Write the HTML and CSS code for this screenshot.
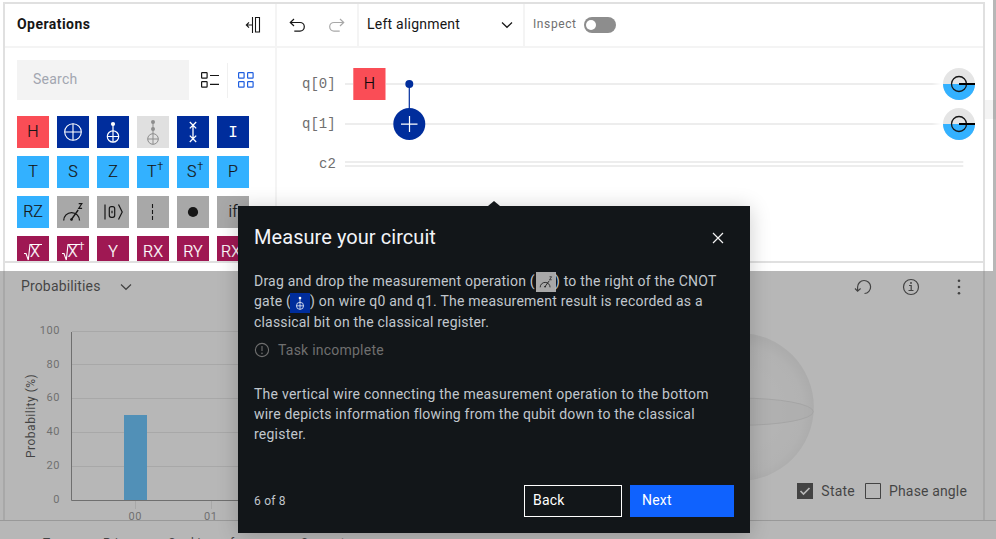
FILE: index.html
```html
<!DOCTYPE html>
<html lang="en">
<head>
<meta charset="utf-8">
<title>Circuit composer</title>
<link rel="stylesheet" href="styles.css">
</head>
<body>
<svg class="defs" width="0" height="0">
  <symbol id="cnot" viewBox="0 0 32 32"><g fill="none" stroke="currentColor" stroke-width="1.2"><circle cx="16" cy="20.5" r="5.7"/><path d="M16 8v18.2M10.3 20.5h11.4"/></g><circle cx="16" cy="8" r="2.1" fill="currentColor"/></symbol>
  <symbol id="measure" viewBox="0 0 32 32"><g fill="none" stroke="currentColor" stroke-width="1.3"><path d="M6.700 24.500a7.900 7.900 0 0 1 15.800 0M14 24l7.200-10"/><path d="M21.700 7.600h3.200l-3.200 4.800h3.400" stroke-width="1.100"/></g><circle cx="14.500" cy="23.500" r="1.300" fill="currentColor"/></symbol>
</svg>
<div class="page">
  <main class="frame">
    <section class="composer">
      <aside class="ops">
        <header class="bar ops-head"><h2>Operations</h2>
          <svg width="16" height="16" viewBox="0 0 16 16" fill="none" stroke="#161616" stroke-width="1.100"><path d="M7.500 0v16M10.500.5h4v14.500h-4zM7 8H1.500M4 5.300L1.300 8 4 10.700"/></svg>
        </header>
        <div class="tools">
          <div class="search">Search</div>
          <svg class="list" width="18" height="16" viewBox="0 0 18 16" fill="none" stroke="#161616" stroke-width="1.200"><rect x=".6" y=".6" width="5.500" height="5.500" rx=".6"/><rect x=".6" y="9.600" width="5.500" height="5.500" rx=".6"/><path d="M9 3.500h9M9 12.400h9"/></svg>
          <i class="sep"></i>
          <svg width="16" height="16" viewBox="0 0 16 16" fill="none" stroke="#1f5fe0" stroke-width="1.200"><rect x=".6" y=".6" width="5.500" height="5.500" rx=".6"/><rect x="9.600" y=".6" width="5.500" height="5.500" rx=".6"/><rect x=".6" y="9.600" width="5.500" height="5.500" rx=".6"/><rect x="9.600" y="9.600" width="5.500" height="5.500" rx=".6"/></svg>
        </div>
        <div class="gates">
          <div class="g red">H</div>
          <div class="g navy"><svg viewBox="0 0 32 32" fill="none" stroke="#fff" stroke-width="1.100"><circle cx="16" cy="16" r="8.300"/><path d="M16 7.700v16.600M7.700 16h16.600"/></svg></div>
          <div class="g navy"><svg><use href="#cnot"/></svg></div>
          <div class="g off"><svg viewBox="0 0 32 32"><g fill="none" stroke="currentColor"><circle cx="16" cy="23" r="5.300"/><path d="M16 6v22.300M10.700 23h10.600"/></g><g fill="currentColor"><circle cx="16" cy="6" r="2"/><circle cx="16" cy="13" r="2"/></g></svg></div>
          <div class="g navy"><svg viewBox="0 0 32 32" fill="none" stroke="#fff" stroke-width="1.300"><path d="M16 9v14M12.800 6l6.400 6.400m0-6.400l-6.400 6.400M12.800 19.600l6.400 6.400m0-6.400l-6.400 6.400"/></svg></div>
          <div class="g navy serif">I</div>
          <div class="g sky">T</div><div class="g sky">S</div><div class="g sky">Z</div>
          <div class="g sky">T<sup>†</sup></div><div class="g sky">S<sup>†</sup></div><div class="g sky">P</div>
          <div class="g sky">RZ</div>
          <div class="g gray"><svg><use href="#measure"/></svg></div>
          <div class="g gray"><svg viewBox="0 0 32 32" fill="none" stroke="#161616" stroke-width="1.200"><path d="M8 8.500v15M21.500 8.500l3.700 7.500-3.700 7.500"/><rect x="12.300" y="10.700" width="5.400" height="10.600" rx="2"/><path d="M15 14.700v2.600"/></svg></div>
          <div class="g gray"><svg viewBox="0 0 32 32" fill="none" stroke="#161616" stroke-width="1.100"><path d="M15.500 8v16" stroke-dasharray="4 2"/></svg></div>
          <div class="g gray"><svg viewBox="0 0 32 32"><circle cx="16" cy="16" r="5.100" fill="#161616"/></svg></div>
          <div class="g gray">if</div>
          <div class="g plum root"><svg viewBox="0 0 32 32" fill="none" stroke="#fff" stroke-width="1.100"><path d="M7 17.500h2l2.300 6.500 1.700-15.500h12"/></svg><b>X</b></div>
          <div class="g plum root dag"><svg viewBox="0 0 32 32" fill="none" stroke="#fff" stroke-width="1.100"><path d="M5 17.500h2l2.300 6.500L11 8.500h12"/></svg><b>X</b><sup>†</sup></div>
          <div class="g plum">Y</div><div class="g plum">RX</div><div class="g plum">RY</div><div class="g plum left">RXX</div>
        </div>
      </aside>
      <div class="work">
        <header class="bar">
          <div class="history">
            <svg width="17" height="16" viewBox="0 0 17 16" fill="none" stroke="#161616" stroke-width="1.200"><path d="M1.200 4.500H11a4.300 4.300 0 0 1 0 8.600H5.300M5 1L1.300 4.500 5 8"/></svg>
            <svg width="17" height="16" viewBox="0 0 17 16" fill="none" stroke="#a8a8a8" stroke-width="1.200"><path d="M15.800 4.500H6a4.300 4.300 0 0 0 0 8.600h5.700M12 1l3.700 3.500L12 8"/></svg>
          </div>
          <div class="select"><span>Left alignment</span><svg width="12" height="8" viewBox="0 0 12 8" fill="none" stroke="#161616" stroke-width="1.200"><path d="M1 1.500l5 4.800 5-4.800"/></svg></div>
          <div class="inspect"><span>Inspect</span><i class="toggle"></i></div>
        </header>
        <svg class="circuit" width="706" height="213" viewBox="277 48 706 213">
          <defs><linearGradient id="fade" gradientUnits="userSpaceOnUse" x1="932" x2="941" y1="0" y2="0"><stop stop-color="#ededed"/><stop offset="1" stop-color="#fff"/></linearGradient></defs>
          <g class="wire-name"><text x="302" y="88">q[0]</text><text x="302" y="128">q[1]</text><text x="319" y="168">c2</text></g>
          <g fill="url(#fade)"><rect x="345" y="83" width="596" height="2"/><rect x="345" y="123" width="596" height="2"/></g>
          <g fill="#ededed"><rect x="345" y="161" width="618.300" height="2"/><rect x="345" y="165" width="618.300" height="2"/></g>
          <rect x="353" y="68" width="33" height="32" fill="#fff"/><rect x="353.300" y="68" width="32.200" height="32" fill="#fa4d56"/>
          <text class="h" x="369.300" y="89" text-anchor="middle">H</text>
          <path d="M409.300 84v28" stroke="#002d9c" stroke-width="1.200"/>
          <circle cx="409.300" cy="84" r="4" fill="#002d9c"/><circle cx="409.300" cy="124" r="16" fill="#002d9c"/>
          <path d="M409.500 116v16M401 124.200h16.500" stroke="#fff" stroke-width="1.200"/>
          <g id="disk"><circle cx="959" cy="84" r="16" fill="#e5e5e5"/><path d="M943 84a16 16 0 0 0 32 0z" fill="#33b1ff"/><circle cx="959" cy="84" r="7.500" fill="none" stroke="#161616" stroke-width="1.300"/><path d="M959 84h16" stroke="#000" stroke-width="2"/></g>
          <use href="#disk" y="40"/>
        </svg>
      </div>
    </section>
    <section class="results">
      <div class="chart-pane">
        <div class="chart-title"><span>Probabilities</span><svg width="12" height="8" viewBox="0 0 12 8" fill="none" stroke="#161616" stroke-width="1.200"><path d="M1 1.500l5 4.800 5-4.800"/></svg></div>
        <svg class="chart" width="495" height="215" viewBox="5 305 495 215">
          <g stroke="#e0e0e0"><path d="M72 331.500h428M72 364.500h428M72 398.500h428M72 432.500h428M72 466.500h428M135.500 501v8M211.500 501v8"/></g>
          <path d="M71.500 332v168.500H500" fill="none" stroke="#6f6f6f"/>
          <rect x="124" y="415" width="23" height="85" fill="#33b1ff"/>
          <g class="tick"><text x="60" y="334">100</text><text x="60" y="368">80</text><text x="60" y="401">60</text><text x="60" y="435">40</text><text x="60" y="469">20</text><text x="60" y="503">0</text><text x="142" y="520">00</text><text x="217.500" y="520">01</text></g>
          <text class="axis" transform="translate(34.500 458) rotate(-90)">Probability (%)</text>
        </svg>
      </div>
      <div class="sphere-pane">
        <div class="actions">
          <svg width="18" height="18" viewBox="0 0 18 18" fill="none" stroke="#161616" stroke-width="1.200"><path d="M10.500 15.500a6.500 6.500 0 1 0-6.900-6.500V13M1 10.500l2.600 2.600 3-2.600"/></svg>
          <svg width="18" height="18" viewBox="0 0 18 18" fill="none" stroke="#161616" stroke-width="1.200"><circle cx="9" cy="9" r="7.500"/><path d="M7 7.500h2.200v5M6.500 12.500h5"/><circle cx="9" cy="5" r=".4"/></svg>
          <svg width="18" height="18" viewBox="0 0 18 18" fill="#161616"><circle cx="9" cy="2.700" r="1.300"/><circle cx="9" cy="9" r="1.300"/><circle cx="9" cy="15.200" r="1.300"/></svg>
        </div>
        <svg class="sphere" width="148" height="150" viewBox="-74 -75 148 150"><defs><radialGradient id="ball" cy=".52"><stop offset=".45" stop-color="#f9f9f9"/><stop offset=".85" stop-color="#f5f5f5"/><stop offset="1" stop-color="#e9e9e9"/></radialGradient></defs><circle r="73.800" fill="url(#ball)"/><ellipse cy="4.700" rx="73.300" ry="13.600" fill="#e8e8e8" fill-opacity=".5" stroke="#dadada"/></svg>
        <div class="checks">
          <svg width="16" height="16" viewBox="0 0 16 16"><path fill="#161616" d="M0 0h16v16H0z"/><path d="M3.500 8l3 3 6-6" fill="none" stroke="#fff" stroke-width="1.700"/></svg><span class="state">State</span>
          <svg width="16" height="16" viewBox="0 0 16 16"><path d="M.5.5h15v15H.5z" fill="none" stroke="#161616"/></svg><span class="phase">Phase angle</span>
        </div>
      </div>
    </section>
  </main>
  <div class="scrollbar"></div>
  <footer><span class="terms">Terms</span><span class="privacy">Privacy</span><span class="cookie">Cookie preferences</span><span>Support</span></footer>
  <div class="spotlight"></div>
  <div class="tour">
    <div class="tour-head"><h1>Measure your circuit</h1><svg width="12" height="12" viewBox="0 0 12 12" fill="none" stroke="#f4f4f4" stroke-width="1.200"><path d="M1 1l10 10M11 1L1 11"/></svg></div>
    <p><span class="l1">Drag and drop the measurement operation (<svg class="chip meas"><use href="#measure"/></svg>) to the right of the CNOT</span>
    <span class="l2">gate (<svg class="chip cx"><use href="#cnot"/></svg>) on wire q0 and q1. The measurement result is recorded as a</span>
    <span class="l3">classical bit on the classical register.</span></p>
    <div class="task"><svg width="16" height="16" viewBox="0 0 16 16" fill="none" stroke="#6f6f6f" stroke-width="1.100"><circle cx="8" cy="8" r="6.600"/><path d="M8 4v5"/><circle cx="8" cy="11.300" r=".3"/></svg><span>Task incomplete</span></div>
    <p class="note"><span class="l4">The vertical wire connecting the measurement operation to the bottom</span>
    <span class="l5">wire depicts information flowing from the qubit down to the classical</span>
    <span class="l6">register.</span></p>
    <div class="tour-foot"><span class="count">6 of 8</span><button class="back">Back</button><button class="next">Next</button></div>
  </div>
</div>
</body>
</html>
```
FILE: styles.css
```css
* { box-sizing: border-box; }
body { margin: 0; overflow: hidden; font: 14px/20px Roboto, "Liberation Sans", sans-serif; letter-spacing: .23px; color: #161616; }
.defs { position: absolute; }
svg { display: block; flex: none; }
h1, h2, p { margin: 0; font-weight: 400; }
.page { position: relative; width: 996px; height: 539px; overflow: hidden; background: #fff; padding: 2px 11px 0 3px; }
.frame { width: 982px; height: 518px; border: 2px solid #e0e0e0; border-bottom: 0; }
.composer { display: flex; height: 259px; border-bottom: 2px solid #e0e0e0; }
.ops { width: 272px; height: 257px; overflow: hidden; border-right: 2px solid #f4f4f4; }
.bar { height: 44px; border-bottom: 2px solid #f4f4f4; display: flex; }
.ops-head { align-items: center; justify-content: space-between; padding: 0 14px 2px 12px; }
.ops-head h2 { font-size: 14px; font-weight: 700; letter-spacing: .45px; }
.ops-head svg { margin-top: 2px; }
.tools { display: flex; align-items: center; height: 40px; margin: 12px 0 16px 12px; }
.search { width: 172px; height: 40px; padding: 9px 16px; background: #f3f3f3; color: #a2a6b0; }
.list { margin-left: 12px; }
.sep { width: 1px; height: 35px; background: #f0f0f0; margin: 0 10px 0 8px; }
.gates { display: grid; grid-template-columns: repeat(6, 32px); grid-auto-rows: 32px; gap: 8px; padding-left: 12px; }
.g { position: relative; overflow: hidden; display: flex; justify-content: center; font-size: 16px; font-weight: 300; line-height: 31px; letter-spacing: 0; -webkit-text-stroke: .2px currentColor; }
.g > svg { width: 32px; height: 32px; }
.g sup { font-size: 10px; line-height: 22px; vertical-align: top; margin-left: 1px; }
.g:has(sup) { padding-left: 4px; }
.red { background: #fa4d56; }
.navy { background: #002d9c; color: #fff; }
.sky { background: #33b1ff; }
.gray { background: #a8a8a8; }
.off { background: #e0e0e0; color: #8d8d8d; }
.plum { background: #9f1853; color: #fff; }
.g.left { justify-content: flex-start; padding-left: 4px; }
.serif { font-family: "Liberation Mono", monospace; line-height: 34px; -webkit-text-stroke: 0; }
.root svg { position: absolute; inset: 0; }
.root b { font-weight: 300; padding-left: 4px; }
.g.dag { padding-left: 6px; }
.dag b { padding: 0; }
.work { flex: 1; }
.history { width: 82px; border-right: 2px solid #f4f4f4; display: flex; gap: 22px; padding: 14px 0 0 12px; }
.select { width: 166px; border-right: 2px solid #f4f4f4; display: flex; justify-content: space-between; padding: 10px 10px 0 8px; }
.select svg { margin-top: 7px; }
.inspect { display: flex; padding: 10px 8px; font-size: 12px; color: #6f6f6f; letter-spacing: .6px; }
.toggle { width: 32px; height: 16px; border-radius: 8px; background: #8d8d8d; margin: 3px 0 0 7px; padding: 3px 2px; }
.toggle::before { content: ""; display: block; width: 10px; height: 10px; border-radius: 50%; background: #fff; }
.wire-name { font: 14px "Liberation Mono", monospace; fill: #6f6f6f; letter-spacing: 0; }
.h { font-size: 16px; font-weight: 300; letter-spacing: 0; stroke: #161616; stroke-width: .2px; }
.results { display: flex; height: 257px; background: #fff; }
.chart-pane { width: 495px; }
.chart-title { display: flex; gap: 19px; height: 42px; padding: 13px 16px 0; letter-spacing: .15px; }
.chart-title svg { margin-top: 7px; }
.tick { font-size: 11px; fill: #6f6f6f; text-anchor: end; letter-spacing: .6px; }
.axis { font-size: 12px; fill: #161616; letter-spacing: .5px; }
.sphere-pane { flex: 1; padding: 15px 15px 0 166px; }
.actions { display: flex; justify-content: flex-end; gap: 30px; height: 54px; }
.checks { display: flex; align-items: center; justify-content: flex-end; height: 18px; }
.checks span { margin-left: 8px; line-height: 18px; position: relative; top: -.5px; }
.checks .state { margin-right: 10px; }
.checks .phase { letter-spacing: .15px; margin-right: 1px; }
.scrollbar { position: absolute; left: 985px; top: 100px; width: 11px; height: 19px; background: #f4f4f4; }
footer { margin: 0 -11px 0 -3px; border-top: 1px solid #c3c3c3; padding: 12px 0 0 43px; display: flex; font-size: 12px; white-space: nowrap; }
.terms { width: 60px; }
.privacy { width: 65px; }
.cookie { width: 133px; letter-spacing: .5px; }
.spotlight { position: absolute; left: 0; top: 0; width: 993px; height: 271px; box-shadow: 0 0 0 1000px rgba(111, 111, 111, .5); }
.tour { position: absolute; left: 238px; top: 206px; width: 512px; height: 327px; padding: 20px 16px 16px; background: #121619; color: #c1c7cd; box-shadow: 0 2px 20px rgba(0, 0, 0, .2); white-space: nowrap; }
.tour::before { content: ""; position: absolute; left: 250px; top: -5px; border: 6px solid transparent; border-top: 0; border-bottom: 5px solid #121619; }
.tour-head { display: flex; justify-content: space-between; padding-right: 10px; height: 45px; }
.tour-head h1 { font-size: 20px; line-height: 23px; color: #f2f4f8; letter-spacing: .06px; }
.tour-head svg { margin-top: 6px; }
.tour p span { display: flex; height: 20.300px; white-space: pre; }
.tour p .l2 { letter-spacing: .22px; }
.tour p .l3 { letter-spacing: .18px; }
.tour p .l4 { letter-spacing: .25px; }
.tour p .l5 { letter-spacing: .21px; }
.chip { width: 20px; height: 20px; margin-top: 1px; }
.meas { background: #a8a8a8; color: #161616; margin-left: 1px; margin-right: -1px; }
.cx { background: #002d9c; color: #fff; margin: 2px 0 0 -1px; }
.task { display: flex; align-items: center; gap: 8px; margin: 8px 0 24px; color: #6f6f6f; }
.note span { height: 20px !important; }
.tour-foot { display: flex; align-items: center; margin-top: 41px; }
.count { flex: 1; font-size: 12px; }
button { font: inherit; letter-spacing: inherit; height: 32px; text-align: left; color: #fff; padding: 0 8px 2px; border-radius: 0; }
.back { width: 98px; background: none; border: 1px solid #fff; margin-right: 8px; }
.next { width: 104px; background: #0f62fe; border: 0; padding-left: 12px; }
```
